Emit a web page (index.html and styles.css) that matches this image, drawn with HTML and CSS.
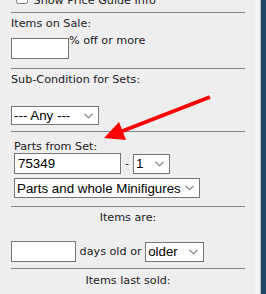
FILE: index.html
```html
<!DOCTYPE html>
<html lang="en">
<head>
    <meta charset="UTF-8">
    <meta name="viewport" content="width=device-width, initial-scale=1.0">
    <title>Search Filters</title>
    <link rel="stylesheet" href="styles.css">
</head>
<body>
    <div class="page">
        <div class="panel">
            <div class="top">
                <label><input type="checkbox" class="check"> Show Price Guide Info</label>
            </div>
            <div class="rule"></div>

            <div class="sec">
                <div>Items on Sale:</div>
                <div class="line">
                    <input type="text" class="pct">% off or more
                </div>
            </div>
            <div class="rule"></div>

            <div class="sec">
                <div>Sub-Condition for Sets:</div>
                <select class="any">
                    <option>--- Any ---</option>
                </select>
            </div>
            <div class="rule"></div>

            <div class="sec set">
                <div class="set-label">Parts from Set:</div>
                <div class="line tight">
                    <input type="text" class="set-no" value="75349">
                    <span class="dash">-</span>
                    <select class="set-ver">
                        <option>1</option>
                    </select>
                </div>
                <select class="set-kind">
                    <option>Parts and whole Minifigures</option>
                </select>
            </div>
            <div class="rule rule-set"></div>

            <div class="sec center">Items are:</div>
            <div class="line days">
                <input type="text" class="age"> days old or <select class="older"><option>older</option></select>
            </div>
            <div class="rule"></div>

            <div class="sec center last">Items last sold:</div>
        </div>
        <div class="edge"></div>
        <div class="desk"></div>
    </div>

    <!-- annotation arrow drawn over the form -->
    <svg class="arrow" width="266" height="294" viewBox="0 0 266 294">
        <line x1="210" y1="97" x2="120" y2="132" stroke="#ff0000" stroke-width="4"/>
        <polygon points="104,138 119,122 126,140" fill="#ff0000"/>
    </svg>
</body>
</html>
```

FILE: styles.css
```css
body {
    margin: 0;
    font-family: "DejaVu Sans", Verdana, sans-serif;
    font-size: 11.2px;
    line-height: 14px;
    color: #222;
    background: #1d4766;
    overflow: hidden;
}
.page {
    display: flex;
    height: 294px;
}
.panel {
    width: 255px;
    box-sizing: border-box;
    padding: 0 10px 0 11px;
    background: #eeeeee;
}
.edge {
    width: 5px;
    background: #f4f4f4;
    border-right: 1px solid #b9b9b9;
}
.desk {
    flex: 1;
    background: #1d4766;
}
.top {
    height: 14px;
    margin-top: -8px;
    padding-left: 1px;
    white-space: nowrap;
}
.check {
    width: 12px;
    height: 12px;
    margin: 0 2px 1px 4px;
    vertical-align: baseline;
}
.rule {
    height: 1px;
    background: #858585;
    margin-top: 6px;
}
.rule-set {
    margin-top: 8px;
}
.sec {
    padding-top: 4px;
}
.center {
    text-align: center;
}
.last {
    padding-top: 5px;
}
.line {
    display: flex;
    align-items: center;
    margin-top: 3px;
    white-space: pre;
}
input[type="text"] {
    box-sizing: border-box;
    height: 21px;
    margin: 0;
    padding: 1px 3px;
    border: 1px solid #767676;
    border-radius: 0;
    background: #fff;
    font-family: "Liberation Sans", Arial, sans-serif;
    font-size: 13.33px;
    color: #000;
}
select {
    -webkit-appearance: none;
    appearance: none;
    box-sizing: border-box;
    height: 20px;
    margin: 0;
    padding: 0 14px 0 2px;
    border: 1px solid #767676;
    border-radius: 0;
    background: #fff url("data:image/svg+xml,%3Csvg xmlns='http://www.w3.org/2000/svg' width='9' height='6'%3E%3Cpolyline points='0.5,0.8 4.5,4.8 8.5,0.8' fill='none' stroke='%23777' stroke-width='1.1'/%3E%3C/svg%3E") no-repeat right 5px center;
    font-family: "Liberation Sans", Arial, sans-serif;
    font-size: 13.33px;
    color: #000;
}
.pct {
    width: 58px;
}
.any {
    display: block;
    width: 88px;
    height: 19px;
    margin-top: 19px;
}
.set {
    padding: 9px 0 0 3px;
}
.set-label {
    line-height: 12px;
}
.tight {
    margin-top: 0;
}
.set-no {
    width: 107px;
}
.dash {
    margin: 0 4px;
}
.set-ver {
    width: 37px;
}
.set-kind {
    display: block;
    width: 186px;
    margin-top: 4px;
}
.days {
    margin-top: 16px;
}
.age {
    width: 65px;
}
.older {
    width: 59px;
}
.arrow {
    position: absolute;
    left: 0;
    top: 0;
    pointer-events: none;
}
```
